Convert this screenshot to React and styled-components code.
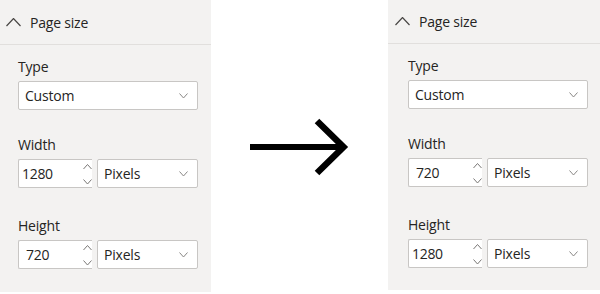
import React from 'react'
import styled, { createGlobalStyle } from 'styled-components'

const Global = createGlobalStyle`
  html, body {
    margin: 0;
    padding: 0;
    background: #ffffff;
  }
  body {
    font-family: "Open Sans", "Noto Sans", "Liberation Sans", sans-serif;
    color: #252423;
  }
`

const Page = styled.div`
  display: flex;
  align-items: flex-start;
  width: 600px;
  height: 294px;
  overflow: hidden;
`

const Panel = styled.div`
  width: ${p => p.$width}px;
  height: ${p => p.$height}px;
  flex: none;
  background: #f3f2f1;
  display: flex;
  flex-direction: column;
`

const Header = styled.div`
  height: ${p => p.$height}px;
  box-sizing: border-box;
  border-bottom: 1px solid #e1dfdd;
  display: flex;
  align-items: center;
  padding-left: ${p => p.$inset}px;
  gap: 9px;
  font-size: 14px;
  letter-spacing: -0.2px;
`

const Body = styled.div`
  padding-left: ${p => p.$inset}px;
  width: 180px;
`

const Field = styled.div`
  display: flex;
  flex-direction: column;
  gap: 4px;
  margin-top: ${p => p.$top}px;
`

const Label = styled.div`
  font-size: 14px;
  line-height: 20px;
  letter-spacing: -0.2px;
`

const Row = styled.div`
  display: flex;
  gap: 5px;
`

const Select = styled.div`
  box-sizing: border-box;
  width: ${p => p.$width}px;
  height: 29px;
  background: #ffffff;
  border: 1px solid #c8c6c4;
  border-radius: 2px;
  display: flex;
  align-items: center;
  justify-content: space-between;
  padding: 0 9px 0 6px;
  font-size: 14px;
  letter-spacing: -0.2px;
`

const NumberBox = styled.div`
  box-sizing: border-box;
  width: 74px;
  height: 29px;
  background: #ffffff;
  border: 1px solid #c8c6c4;
  border-right: none;
  border-radius: 2px 0 0 2px;
  display: flex;
  align-items: center;
  justify-content: space-between;
  padding-left: ${p => p.$pad}px;
  font-size: 14px;
  letter-spacing: -0.3px;
`

const Spinner = styled.div`
  display: flex;
  flex-direction: column;
  justify-content: space-between;
  height: 21px;
  padding-top: 1px;
`

const ArrowArea = styled.div`
  flex: 1;
  height: 294px;
  display: flex;
  align-items: center;
  justify-content: center;
`

const Chevron = ({ up, w = 9, h = 5, color = '#8a8886', sw = 1 }) => (
  <svg width={w} height={h + 1} viewBox={`0 0 ${w} ${h + 1}`} fill="none">
    <polyline
      points={up ? `0.5,${h} ${w / 2},0.5 ${w - 0.5},${h}` : `0.5,0.5 ${w / 2},${h} ${w - 0.5},0.5`}
      stroke={color}
      strokeWidth={sw}
    />
  </svg>
)

function SizePanel({ width, height, headerHeight, inset, w, h }) {
  return (
    <Panel $width={width} $height={height}>
      <Header $height={headerHeight} $inset={inset.head}>
        <Chevron up w={15} h={8} color="#484644" sw={1.2} />
        <span>Page size</span>
      </Header>
      <Body $inset={inset.body}>
        <Field $top={12}>
          <Label>Type</Label>
          <Select $width={180}>
            <span>Custom</span>
            <Chevron />
          </Select>
        </Field>
        {[['Width', w, 25], ['Height', h, 28]].map(([name, value, top]) => (
          <Field key={name} $top={top}>
            <Label>{name}</Label>
            <Row>
              <NumberBox $pad={value.length > 3 ? 3 : 7}>
                <span>{value}</span>
                <Spinner>
                  <Chevron up w={9} h={5} color="#7a7876" />
                  <Chevron w={9} h={5} color="#7a7876" />
                </Spinner>
              </NumberBox>
              <Select $width={101}>
                <span>Pixels</span>
                <Chevron />
              </Select>
            </Row>
          </Field>
        ))}
      </Body>
    </Panel>
  )
}

export default function App() {
  return (
    <>
      <Global />
      <Page>
        <SizePanel
          width={211}
          height={292}
          headerHeight={45}
          inset={{ head: 6, body: 18 }}
          w="1280"
          h="720"
        />
        <ArrowArea>
          <svg width="100" height="58" viewBox="0 0 100 58" fill="none">
            <line x1="0" y1="29" x2="93" y2="29" stroke="#000" strokeWidth="6" />
            <polyline points="67,3 93.5,29 67,55" stroke="#000" strokeWidth="6.5" />
          </svg>
        </ArrowArea>
        <SizePanel
          width={212}
          height={290}
          headerHeight={44}
          inset={{ head: 7, body: 20 }}
          w="720"
          h="1280"
        />
      </Page>
    </>
  )
}
